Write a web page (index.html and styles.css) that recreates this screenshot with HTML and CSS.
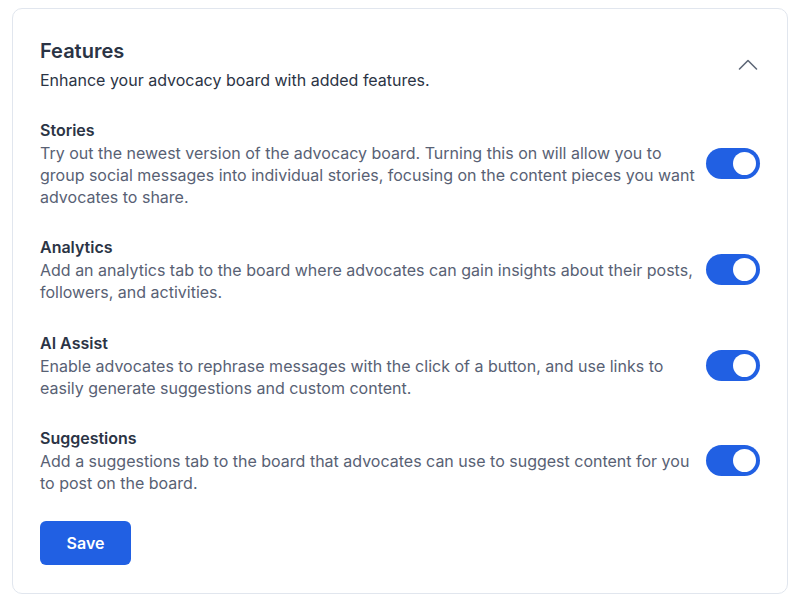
FILE: index.html
```html
<!DOCTYPE html>
<html lang="en">
<head>
<meta charset="utf-8">
<title>Features</title>
<link rel="stylesheet" href="styles.css">
</head>
<body>
<section class="card">
  <header class="card-header">
    <div class="header-text">
      <h2 class="title">Features</h2>
      <p class="subtitle">Enhance your advocacy board with added features.</p>
    </div>
    <button class="collapse" aria-label="Collapse">
      <svg width="24" height="24" viewBox="0 0 24 24" fill="none" stroke="currentColor" stroke-width="1.6" stroke-linecap="round" stroke-linejoin="round"><path d="M3.5 16 L12 7.5 L20.5 16"/></svg>
    </button>
  </header>

  <div class="features">
    <div class="feature">
      <div class="feature-text">
        <h3 class="feature-name">Stories</h3>
        <p class="feature-desc">Try out the newest version of the advocacy board. Turning this on will allow you to group social messages into individual stories, focusing on the content pieces you want advocates to share.</p>
      </div>
      <span class="toggle on"><span class="knob"></span></span>
    </div>
    <div class="feature">
      <div class="feature-text">
        <h3 class="feature-name">Analytics</h3>
        <p class="feature-desc">Add an analytics tab to the board where advocates can gain insights about their posts, followers, and activities.</p>
      </div>
      <span class="toggle on"><span class="knob"></span></span>
    </div>
    <div class="feature">
      <div class="feature-text">
        <h3 class="feature-name">AI Assist</h3>
        <p class="feature-desc">Enable advocates to rephrase messages with the click of a button, and use links to easily generate suggestions and custom content.</p>
      </div>
      <span class="toggle on"><span class="knob"></span></span>
    </div>
    <div class="feature">
      <div class="feature-text">
        <h3 class="feature-name">Suggestions</h3>
        <p class="feature-desc">Add a suggestions tab to the board that advocates can use to suggest content for you to post on the board.</p>
      </div>
      <span class="toggle on"><span class="knob"></span></span>
    </div>
  </div>

  <div class="actions">
    <button class="save">Save</button>
  </div>
</section>
</body>
</html>
```
FILE: styles.css
```css
* { box-sizing: border-box; }
html, body { margin: 0; padding: 0; background: #ffffff; }
body {
  padding: 8px 5px 0 12px;
  font-family: Inter, "Liberation Sans", Arial, sans-serif;
  color: #2b3445;
}
.card {
  width: 776px;
  height: 586px;
  border: 1px solid #e1e6ee;
  border-radius: 10px;
  padding: 28px 27px 0 27px;
}
.card-header {
  display: flex;
  align-items: center;
  justify-content: space-between;
}
.title {
  margin: 0;
  font-size: 20px;
  line-height: 28px;
  font-weight: 600;
  color: #2b3445;
}
.subtitle {
  margin: 3px 0 0;
  font-size: 16px;
  line-height: 24px;
  color: #2b3445;
}
.collapse {
  background: none;
  border: 0;
  padding: 0;
  width: 24px;
  height: 24px;
  color: #5f6878;
  display: flex;
}
.features {
  margin-top: 27px;
  display: flex;
  flex-direction: column;
  gap: 28.3px;
}
.feature {
  display: flex;
  align-items: center;
  gap: 6px;
}
.feature-text { flex: 1; }
.feature-name {
  margin: 0;
  font-size: 16px;
  line-height: 23px;
  font-weight: 600;
  color: #2b3445;
}
.feature-desc {
  margin: 0;
  font-size: 16px;
  line-height: 22px;
  color: #586174;
}
.toggle {
  flex: none;
  width: 54px;
  height: 31px;
  border-radius: 16px;
  background: #2160e3;
  display: flex;
  align-items: center;
  justify-content: flex-end;
  padding: 0 4px;
}
.knob {
  width: 23px;
  height: 23px;
  border-radius: 50%;
  background: #ffffff;
}
.actions { margin-top: 27px; }
.save {
  width: 91px;
  height: 44px;
  border: 0;
  border-radius: 6px;
  background: #2160e3;
  color: #ffffff;
  font-family: Inter, "Liberation Sans", Arial, sans-serif;
  font-size: 16px;
  font-weight: 600;
}
```
